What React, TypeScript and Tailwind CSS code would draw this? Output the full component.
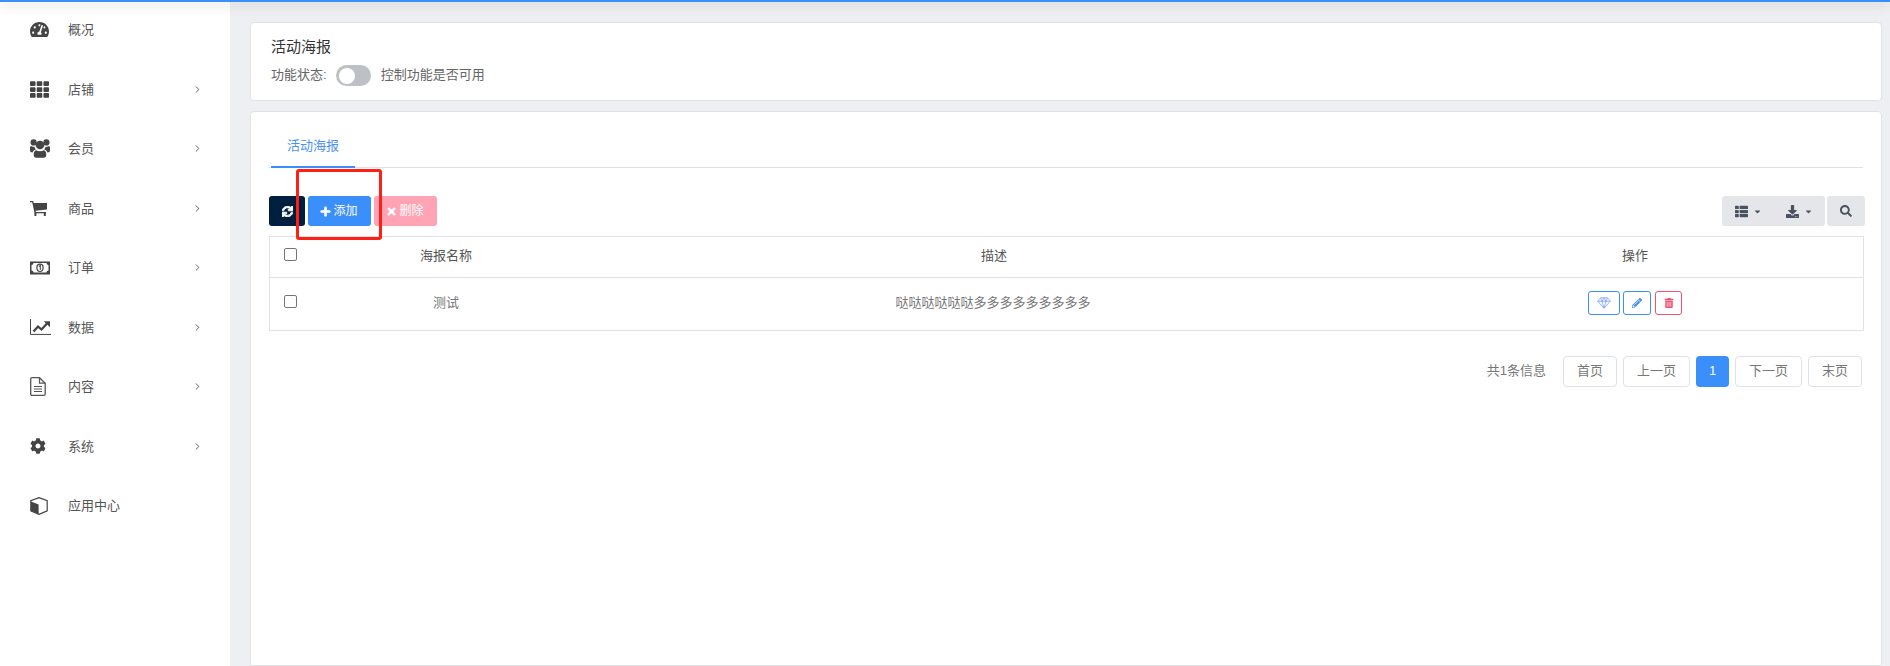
import type { ReactNode } from "react";
import { FaTachometerAlt, FaTh, FaCog, FaSync, FaPlus, FaTimes, FaThList, FaDownload, FaSearch, FaPencilAlt, FaTrashAlt, FaCaretDown } from "react-icons/fa";
import { LuChevronRight } from "react-icons/lu";

const UsersIcon = (
  <svg width="20" height="19" viewBox="0 0 20 19" fill="#444">
    <circle cx="3.6" cy="3.4" r="3.1" />
    <circle cx="16.4" cy="3.4" r="3.1" />
    <circle cx="10" cy="6" r="4.3" />
    <path d="M0 8.5c0-1 .8-1.5 1.6-1.2 1 .5 2 .6 2.8.4.2 1 .7 2 1.4 2.7C3.900 11 3 12 2.600 13.500 1 13.500 0 12.800 0 11.500z" />
    <path d="M20 8.500c0-1-.8-1.500-1.600-1.200-1 .5-2 .6-2.800.4-.2 1-.7 2-1.400 2.700 1.900.6 2.800 1.600 3.200 3.100 1.600 0 2.600-.7 2.600-2z" />
    <path d="M6.200 11.200c2.200 1.400 5.400 1.400 7.600 0 1.600.5 2.400 2 2.400 4v1.300c0 1.400-1 2.200-2.200 2.200H6c-1.200 0-2.200-.8-2.200-2.200v-1.300c0-2 .8-3.500 2.400-4z" />
  </svg>
);

const CartIcon = (
  <svg width="18" height="15" viewBox="0 0 18 15" fill="#444">
    <path d="M0 0h3.200l.6 2H17v6.500L5.600 9.800l.3 1.200H16v1.200H4.600L2.200 1.200H0z" />
    <rect x="4.400" y="11.800" width="2" height="3.200" />
    <rect x="13.800" y="11.800" width="2" height="3.200" />
  </svg>
);

const MoneyIcon = (
  <svg width="20" height="14" viewBox="0 0 20 14">
    <rect width="20" height="13" y="0.500" fill="#444" />
    <path d="M3.500 2H16.500C16.800 3.400 17.200 3.800 18.500 4V9.500C17.200 9.700 16.800 10.100 16.500 11.500H3.500C3.200 10.100 2.800 9.700 1.500 9.500V4C2.800 3.800 3.200 3.400 3.500 2Z" fill="#fff" />
    <ellipse cx="10" cy="6.800" rx="3.700" ry="4.200" fill="#444" />
    <ellipse cx="10" cy="6.800" rx="2.500" ry="3.100" fill="#fff" />
    <path d="M9 5.500l1.300-1V9" stroke="#444" strokeWidth="1.100" fill="none" />
  </svg>
);

const ChartIcon = (
  <svg width="21" height="16" viewBox="0 0 21 16" fill="none">
    <path d="M.5 0V15.400H21" stroke="#444" strokeWidth="1" />
    <path d="M3.500 12.500L8 7.500l3.500 3L17 4.500" stroke="#444" strokeWidth="2.300" />
    <path d="M13.800 2.200H20V8.200z" fill="#444" />
  </svg>
);

const FileIcon = (
  <svg width="16" height="19" viewBox="0 0 16 19" fill="none" stroke="#555">
    <path d="M1.500.7H9.500L15.200 6.200V17a1.300 1.300 0 0 1-1.300 1.300H2A1.300 1.300 0 0 1 .7 17V2A1.300 1.300 0 0 1 2 .7z" strokeWidth="1.300" />
    <path d="M9.500.7V6.200H15.200" strokeWidth="1.200" />
    <path d="M4 9.500H12M4 12H12M4 14.500H12" strokeWidth="1.200" />
  </svg>
);

const CubeIcon = (
  <svg width="18" height="18" viewBox="0 0 18 18">
    <path d="M9 .6L17.200 3.600V13.800L9 17.400.8 13.800V3.600z" fill="#fff" stroke="#444" strokeWidth="1.200" />
    <path d="M1 4.500L8.600 7.600V17L1 13.700z" fill="#444" />
  </svg>
);

const GemIcon = (
  <svg width="14" height="12" viewBox="0 0 14 12" fill="none" stroke="#8aa8ff" strokeWidth="0.900">
    <path d="M3.500.8H10.500L13.300 4.300 7 11.200.7 4.300z" />
    <path d="M.7 4.300H13.300M3.500.8L5 4.300 7 11.200 9 4.300 10.500.8M5 4.300L7 .8 9 4.300" />
  </svg>
);

const menu: { icon: ReactNode; label: string; arrow: boolean }[] = [
  { icon: <FaTachometerAlt size={19} color="#444" />, label: "概况", arrow: false },
  { icon: <FaTh size={19} color="#444" />, label: "店铺", arrow: true },
  { icon: UsersIcon, label: "会员", arrow: true },
  { icon: CartIcon, label: "商品", arrow: true },
  { icon: MoneyIcon, label: "订单", arrow: true },
  { icon: ChartIcon, label: "数据", arrow: true },
  { icon: FileIcon, label: "内容", arrow: true },
  { icon: <FaCog size={16} color="#444" />, label: "系统", arrow: true },
  { icon: CubeIcon, label: "应用中心", arrow: false },
];

const pages = [
  { label: "首页", w: "w-[54px]" },
  { label: "上一页", w: "w-[67px]" },
  { label: "1", w: "w-[33px]", active: true },
  { label: "下一页", w: "w-[67px]" },
  { label: "末页", w: "w-[54px]" },
];

function Check() {
  return <span className="block h-[13px] w-[13px] rounded-[2px] border border-[#767676] bg-white" />;
}

export default function App() {
  return (
    <div className="relative flex h-[666px] w-[1890px] overflow-hidden bg-[#edeff2] text-[13px] text-[#666] font-['Liberation_Sans','Noto_Sans_CJK_SC',sans-serif]">
      <div className="absolute inset-x-0 top-0 z-20 h-[2px] bg-[#3b8ffb] shadow-[0_2px_12px_rgba(0,0,0,0.3)]" />

      <aside className="w-[230px] shrink-0 bg-white">
        {menu.map((m) => (
          <div key={m.label} className="flex h-[59.5px] items-center pl-[30px] pr-[27px] text-[#555]">
            <span className="flex w-[38px] shrink-0 items-center">{m.icon}</span>
            <span className="flex-1">{m.label}</span>
            {m.arrow && <LuChevronRight size={11} color="#555" />}
          </div>
        ))}
      </aside>

      <main className="flex min-w-0 flex-1 flex-col gap-[10px] pl-5 pr-2 pt-[22px]">
        <section className="h-[79px] shrink-0 rounded-[4px] border border-[#e0e2e6] bg-white pl-5 pt-[11px]">
          <h1 className="text-[15px] leading-[26px] text-[#333]">活动海报</h1>
          <div className="mt-[5px] flex h-[21px] items-center">
            <span className="pb-[1px]">功能状态:</span>
            <span className="ml-[9px] flex h-[21px] w-[35px] items-center rounded-full bg-[#bdc0c5] pl-[3px]">
              <span className="h-[16px] w-[16px] rounded-full bg-white" />
            </span>
            <span className="ml-[10px] pb-[1px]">控制功能是否可用</span>
          </div>
        </section>

        <section className="relative flex-1 rounded-t-[4px] border border-[#e0e2e6] bg-white pl-[18px] pr-[16px] pt-[16px]">
          <div className="mr-[2px] flex h-[40px] border-b border-[#dfe1e5] pl-[2px]">
            <div className="-mb-px flex h-[40px] w-[84px] items-center justify-center border-b-2 border-[#3b8ffb] pb-[3px] text-[#4a90f5]">活动海报</div>
          </div>

          <div className="mt-[28px] flex h-[30px] items-center text-[12px] text-white">
            <button className="flex h-[30px] w-[36px] items-center justify-center rounded-[3px] bg-[#001f3f]">
              <FaSync size={11} stroke="currentColor" strokeWidth={40} />
            </button>
            <button className="ml-[3px] flex h-[30px] w-[63px] items-center justify-center gap-[2px] rounded-[3px] bg-[#3b8ffb] pr-[1px]">
              <FaPlus size={11} stroke="currentColor" strokeWidth={30} />
              添加
            </button>
            <button className="ml-[3px] flex h-[30px] w-[63px] items-center justify-center gap-[2px] rounded-[3px] bg-[#ffa3b5] pr-[1px]">
              <FaTimes size={11} stroke="currentColor" strokeWidth={30} />
              删除
            </button>
            <div className="ml-auto flex h-[30px] w-[103px] items-center rounded-[3px] bg-[#e4e6ea] text-[#4a5260]">
              <span className="flex w-[51px] items-center justify-center gap-[5px] pl-[2px]"><FaThList size={13} /><FaCaretDown size={9} /></span>
              <span className="flex w-[52px] items-center justify-center gap-[5px]"><FaDownload size={13} /><FaCaretDown size={9} /></span>
            </div>
            <div className="ml-[2px] flex h-[30px] w-[38px] items-center justify-center rounded-[3px] bg-[#e4e6ea] text-[#4a5260]">
              <FaSearch size={12} />
            </div>
          </div>

          <div className="mr-[1px] mt-[10px] border border-[#e0e2e7]">
            <div className="grid h-[41px] grid-cols-[41px_270px_826px_1fr] border-b border-[#e0e2e7] text-center text-[#555]">
              <div className="pl-[14px] pt-[11px]"><Check /></div>
              <div className="flex items-center justify-center pb-[3px]">海报名称</div>
              <div className="flex items-center justify-center pb-[3px]">描述</div>
              <div className="flex items-center justify-center pb-[3px]">操作</div>
            </div>
            <div className="grid h-[52px] grid-cols-[41px_270px_826px_1fr] text-center text-[#777]">
              <div className="pl-[14px] pt-[17px]"><Check /></div>
              <div className="flex items-center justify-center pb-[3px]">测试</div>
              <div className="flex items-center justify-center pb-[3px] pr-[2px]">哒哒哒哒哒哒多多多多多多多多多</div>
              <div className="flex items-center justify-center gap-[3px] pb-[2px]">
                <span className="flex h-[24px] w-[32px] items-center justify-center rounded-[3px] border border-[#3b8ffb] text-[#3b8ffb]">{GemIcon}</span>
                <span className="flex h-[24px] w-[28px] items-center justify-center rounded-[3px] border border-[#3b8ffb] text-[#3b8ffb]"><FaPencilAlt size={10} /></span>
                <span className="ml-[1px] flex h-[24px] w-[27px] items-center justify-center rounded-[3px] border border-[#f2506e] text-[#f2506e]"><FaTrashAlt size={10} /></span>
              </div>
            </div>
          </div>

          <div className="mr-[3px] mt-[25px] flex items-center justify-end gap-[6px]">
            <span className="mr-[11px] pb-[2px] text-[#777]">共1条信息</span>
            {pages.map((p) => (
              <span
                key={p.label}
                className={
                  p.active
                    ? `flex h-[31px] ${p.w} items-center justify-center rounded-[4px] bg-[#3b8ffb] pb-[1px] text-white`
                    : `flex h-[31px] ${p.w} items-center justify-center rounded-[4px] border border-[#dfe1e8] pb-[2px] text-[#777]`
                }
              >
                {p.label}
              </span>
            ))}
          </div>

          <div className="absolute left-[45px] top-[57px] h-[71px] w-[86px] rounded-[3px] border-[3px] border-[#ff1f14]" />
        </section>
      </main>
    </div>
  );
}
